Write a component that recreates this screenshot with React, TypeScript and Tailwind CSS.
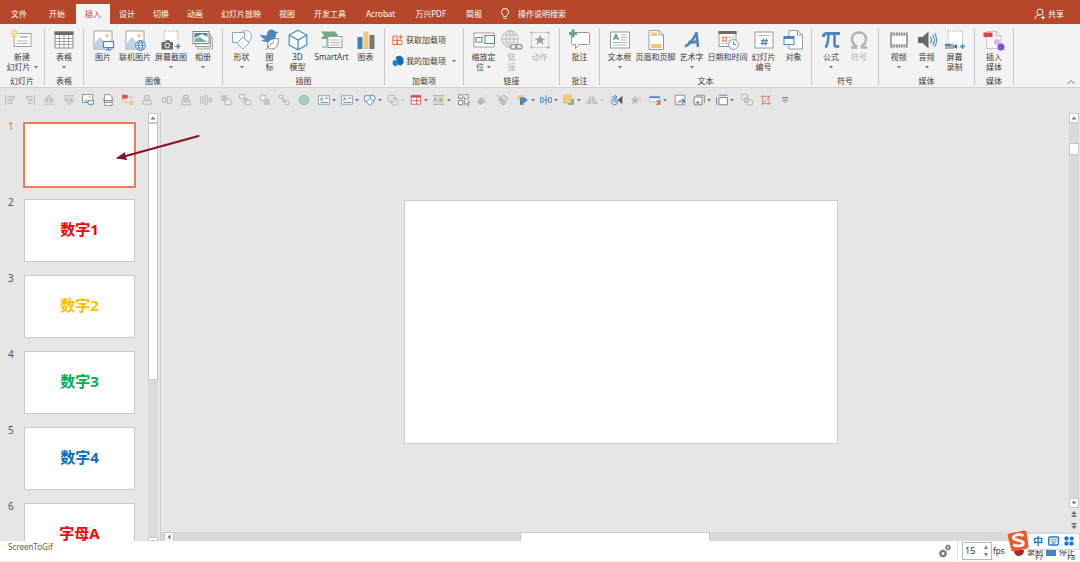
import { useState } from 'react'
import type { ReactNode } from 'react'
import { clsx } from 'clsx'

const GRAY = '#8a8a8a'
const LIGHT = '#b4b4b4'
const BLUE = '#4a86c0'
const GOLD = '#efc878'

function Icon({ children, className }: { children: ReactNode; className?: string }) {
  return (
    <svg
      viewBox="0 0 20 20"
      fill="none"
      className={clsx('shrink-0 overflow-visible', className ?? 'h-5 w-5')}
      aria-hidden="true"
    >
      {children}
    </svg>
  )
}

function Caret({ light }: { light?: boolean }) {
  return (
    <svg viewBox="0 0 4 3" className="h-[3px] w-1 shrink-0" aria-hidden="true">
      <path d="M0 0h4L2 2.6z" fill={light ? '#c4c4c4' : '#7a7a7a'} />
    </svg>
  )
}

const picture = (
  <>
    <rect x="1" y="1" width="18" height="18" fill="#fff" stroke="#a0a0a0" />
    <circle cx="14" cy="5.5" r="1.8" fill={GOLD} />
    <path d="M2 18.5V13l5-6 5 6v5.5z" fill="#bcd2ea" />
  </>
)

const ribbonIcons = {
  newSlide: (
    <Icon>
      <rect x="2" y="3.5" width="17" height="13" fill="#fff" stroke="#a0a0a0" />
      <path d="M8 7h8" stroke="#c4c4c4" strokeWidth="2" />
      <path d="M5 11h11M5 13.5h11" stroke={LIGHT} />
      <path d="M3 -1v9M-1.5 3.500h9M-.2 .3l6.400 6.400M6.200 .3L-.2 6.700" stroke="#f0bd5c" />
      <circle cx="3" cy="3.500" r="1.600" fill="#fff" stroke="#f0bd5c" strokeWidth=".6" />
    </Icon>
  ),
  table: (
    <Icon>
      <rect x="1" y="2" width="18" height="16" fill="#fff" stroke={GRAY} />
      <path d="M.5 1.5h19V5H.5z" fill="#6c6c6c" />
      <path d="M1 8.500h18M1 11.500h18M1 14.500h18M5.5 5v13M10 5v13M14.500 5v13" stroke="#a2a2a2" />
    </Icon>
  ),
  picture: (
    <Icon>
      {picture}
      <rect x="10.5" y="11.5" width="10" height="6" fill="#fff" stroke={BLUE} strokeWidth="1.200" />
      <path d="M15.500 18v2M12.500 20h6" stroke={BLUE} strokeWidth="1.200" />
    </Icon>
  ),
  onlinePicture: (
    <Icon>
      {picture}
      <circle cx="15.5" cy="15.5" r="4.900" fill="#fff" stroke={BLUE} />
      <ellipse cx="15.5" cy="15.5" rx="2" ry="4.900" stroke={BLUE} />
      <path d="M11 15.5h9M12 13h7M12 18h7" stroke={BLUE} strokeWidth=".8" />
    </Icon>
  ),
  screenshot: (
    <Icon>
      <rect x="3" y="1" width="14" height="15" fill="#fff" stroke="#a8a8a8" strokeDasharray="1 1" />
      <path d="M.5 12H4l1-1.700h3.500l1 1.700H12v7.500H.5z" fill="#6a6a6a" />
      <circle cx="6.300" cy="15.500" r="2.300" fill="#6a6a6a" stroke="#fff" />
      <path d="M17 14v5M14.500 16.500h5" stroke={BLUE} strokeWidth="1.400" />
    </Icon>
  ),
  album: (
    <Icon>
      <path d="M4.500 7h15v12h-15z" fill="#ddd" stroke="#b5b5b5" />
      <path d="M2.500 4.500h15v12h-15z" fill="#eee" stroke="#a5a5a5" />
      <rect x="0" y="1.500" width="16" height="12" fill="#fff" stroke="#858585" />
      <path d="M1.500 3h13v4L9 4 1.500 8z" fill={BLUE} />
      <path d="M1.500 9l5-2 8 5h-13z" fill="#7fb29c" />
    </Icon>
  ),
  shapes: (
    <Icon>
      <circle cx="13.5" cy="6.500" r="6" fill="#fff" stroke="#7fa9d6" />
      <path d="M.5 2.500h12v10H.5z" fill="#fff" stroke="#7fa9d6" />
      <path d="M11 7l6 6-6 6-6-6z" fill="#fff" stroke="#7fa9d6" />
    </Icon>
  ),
  icons: (
    <Icon>
      <path d="M0 4c2 1.500 5 2 7 1 0-3 1.500-5.500 4.500-5.500 2 0 3 1 3.500 2L18.500 2l-2.500 2c0 5-3 8-8 8-3 0-5-.6-7-2 2 0 3-.4 4-1-3-.5-4.500-2.500-5-5z" fill={BLUE} />
      <path d="M18.500 8.500c-7 0-11 2-11 6.500 0 3 2 4 4 4 5 0 7-4 7-10.500z" fill="#fff" stroke={GRAY} />
      <path d="M6 20c2-4 5-6 8-8" stroke={GRAY} />
    </Icon>
  ),
  model: (
    <Icon>
      <path d="M10 .3l8.800 4.700v10L10 19.700 1.200 15V5z" fill="#fff" stroke="#3c8ad0" strokeWidth="1.200" />
      <path d="M1.200 5L10 10l8.800-5M10 10v9.700" stroke="#3c8ad0" strokeWidth="1.200" />
    </Icon>
  ),
  smartArt: (
    <Icon>
      <path d="M-1 1.500h14L16 5l-3 4H-1l3-3.700z" fill="#75a78e" />
      <path d="M5 9v8H0" stroke="#75a78e" />
      <rect x="6" y="6.500" width="14" height="11" fill="#fff" stroke="#999" />
      <path d="M8 10h10M8 12.500h10M8 15h10" stroke="#b5b5b5" />
    </Icon>
  ),
  chart: (
    <Icon>
      <path d="M1.500 7h5v12h-5z" fill="#477fb5" />
      <path d="M7.500 1.500h5V19h-5z" fill={GOLD} />
      <path d="M13.500 5h5v14h-5z" fill="#777" />
    </Icon>
  ),
  zoom: (
    <Icon>
      <rect x="0" y="3" width="20" height="14" fill="#fff" stroke="#a0a0a0" />
      <rect x="2" y="7.500" width="6" height="4.500" stroke={BLUE} />
      <rect x="11" y="5.500" width="9.500" height="8" fill="#fff" stroke={BLUE} />
      <path d="M8 7.500l3-2M8 12l3 1.500" stroke="#9dbede" />
    </Icon>
  ),
  link: (
    <Icon>
      <circle cx="8" cy="9" r="8.300" stroke="#b9b9b9" />
      <ellipse cx="8" cy="9" rx="4" ry="8.300" stroke="#b9b9b9" />
      <path d="M0 9h16M1 5h14M1 13h14M8 1v16" stroke="#b9b9b9" />
      <path d="M8 13h14v8H8z" fill="#f3f3f3" />
      <rect x="8.500" y="14.500" width="6.500" height="4.500" rx="2.200" stroke="#9b9b9b" strokeWidth="1.400" />
      <rect x="13.500" y="14.500" width="6.500" height="4.500" rx="2.200" stroke="#9b9b9b" strokeWidth="1.400" />
    </Icon>
  ),
  action: (
    <Icon>
      <rect x="1.500" y="2.500" width="17" height="15" stroke="#b8b8b8" strokeDasharray="1.500 1" />
      <path d="M10 4.500l1.500 4h4l-3.200 2.300 1.300 4L10 12.300l-3.600 2.500 1.300-4L4.500 8.500h4z" fill="#9b9b9b" />
      <path d="M.5 1.500h2v2h-2zM17.500 1.500h2v2h-2zM.5 16.500h2v2h-2zM17.500 16.500h2v2h-2z" fill="#aaa" />
    </Icon>
  ),
  comment: (
    <Icon>
      <path d="M2.500 2.500h16a1 1 0 011 1v10a1 1 0 01-1 1H9l-3.500 4v-4h-3a1 1 0 01-1-1v-10z" fill="#fff" stroke="#999" />
      <path d="M-1 2h2.500V-.5h3V2H7v3H4.500v2.500h-3V5H-1z" fill="#6aa58b" />
    </Icon>
  ),
  textBox: (
    <Icon>
      <rect x=".5" y="2" width="19" height="16" fill="#fff" stroke="#999" />
      <path d="M3.500 10L6 4.500 8.500 10M4.500 8.200h3" stroke={BLUE} strokeWidth="1.300" />
      <path d="M11 5h6M11 7.500h6M11 10h6M3 12.500h14M3 15h14" stroke="#b5b5b5" />
    </Icon>
  ),
  headerFooter: (
    <Icon>
      <path d="M3 .5h10l4.500 4.500v14.500H3z" fill="#fff" stroke="#999" />
      <path d="M13 .5V5h4.500" stroke="#999" />
      <path d="M5 2.500h6v3.500H5zM5 14h10.500v4H5z" fill={GOLD} />
    </Icon>
  ),
  wordArt: (
    <Icon>
      <path d="M3 16.500C9 13.500 12 9 14.500 2.500L16 17M6.500 11.500c3 1.500 6 1 9-.5" stroke={BLUE} strokeWidth="2.600" />
    </Icon>
  ),
  dateTime: (
    <Icon>
      <rect x="1" y="1.500" width="17" height="15" fill="#fff" stroke="#999" />
      <path d="M.5 1h18v3H.5z" fill="#6c6c6c" />
      <path d="M3 7.500h13M3 10.500h13M3 13.500h13M5 5v10M8.500 5v10M12 5v10M15.500 5v10" stroke="#cfcfcf" />
      <rect x="5" y="7.500" width="3.500" height="3.500" stroke="#e88a5a" />
      <circle cx="15.500" cy="14.500" r="4.900" fill="#fff" stroke="#6f9fce" />
      <path d="M15.500 11.500v3h2.500" stroke={BLUE} />
    </Icon>
  ),
  slideNumber: (
    <Icon>
      <rect x="1" y="2" width="18" height="16" fill="#fff" stroke="#999" />
      <path d="M4 5.500h12" stroke="#bbb" />
      <path d="M9.500 8.500l-1 7M12.500 8.500l-1 7M7 10.700h7M6.500 13.300h7" stroke={BLUE} strokeWidth="1.200" />
    </Icon>
  ),
  object: (
    <Icon>
      <path d="M5 .5h8.500L18.500 5v14H5z" fill="#fff" stroke="#999" />
      <path d="M13.500 .5V5h5" stroke="#999" />
      <rect x="0" y="6.500" width="10" height="8" fill="#fff" stroke={BLUE} />
      <path d="M0 6h10v3H0z" fill={BLUE} />
    </Icon>
  ),
  equation: (
    <Icon>
      <path d="M2 7C2.500 4 4 3.500 6 3.500h13" stroke={BLUE} strokeWidth="2.800" />
      <path d="M7.500 4c0 6-.5 10-3 13.500" stroke={BLUE} strokeWidth="2.600" />
      <path d="M13.500 4v10c0 3 2.500 3.500 4.500 1.500" stroke={BLUE} strokeWidth="2.600" />
    </Icon>
  ),
  omega: (
    <Icon>
      <path d="M2 17.500h5v-1.500C4 14 3 12 3 9c0-4 3-6.500 7-6.500S17 5 17 9c0 3-1 5-4 7v1.500h5" stroke="#b2b2b2" strokeWidth="2.500" />
    </Icon>
  ),
  video: (
    <Icon>
      <rect x="2" y="2.500" width="16" height="15" fill="#fff" />
      <path d="M2 3.500h16M2 16.500h16" stroke="#777" strokeWidth="2" strokeDasharray="1.500 1" />
      <path d="M2 5h16v10H2zM2 2v16M18 2v16" stroke="#888" />
    </Icon>
  ),
  audio: (
    <Icon>
      <path d="M1 7h4.500L11.500 1.500v17L5.500 13H1z" fill="#666" />
      <path d="M13.500 7c1.300 2 1.300 4 0 6M15.500 5c2.200 3 2.200 7 0 10M17.500 3c2.800 4 2.800 10 0 14" stroke={BLUE} strokeWidth="1.100" />
    </Icon>
  ),
  recording: (
    <Icon>
      <rect x="3" y="1" width="14.500" height="16" fill="#fff" stroke="#aaa" strokeDasharray="1 1" />
      <path d="M0 13.500h9v5.500H0z" fill="#b0b0b0" />
      <path d="M0 14h6v2H0z" fill={BLUE} />
      <path d="M8 16.500l4-2.500v5z" fill="#666" />
      <path d="M17.500 14v5M15 16.500h5" stroke={BLUE} strokeWidth="1.400" />
    </Icon>
  ),
  insertMedia: (
    <Icon>
      <path d="M2.500 1.500h10l4.500 4.500v12.500H2.500z" fill="#f7f7f7" stroke="#c9c9c9" />
      <path d="M12.500 1.500V6H17" stroke="#b9b9b9" />
      <path d="M-.5 2.500h9V7h-9z" fill="#e2414a" />
      <circle cx="13" cy="12" r="3" fill="#cdbbf0" />
      <circle cx="17" cy="17" r="3.500" fill="#8250d0" />
    </Icon>
  ),
}

type Command = {
  icon: keyof typeof ribbonIcons
  lines: string[]
  width: string
  caret?: 'below' | 'inline'
  disabled?: boolean
}

type Group = { title: string; width: string; commands?: Command[] }

const S = 'w-7'
const M = 'w-8'
const L = 'w-9'
const XL = 'w-10'

const groups: Group[] = [
  { title: '幻灯片', width: 'w-[45px]', commands: [{ icon: 'newSlide', lines: ['新建', '幻灯片'], width: XL, caret: 'inline' }] },
  { title: '表格', width: 'w-[39px]', commands: [{ icon: 'table', lines: ['表格'], width: S, caret: 'below' }] },
  {
    title: '图像',
    width: 'w-[139px]',
    commands: [
      { icon: 'picture', lines: ['图片'], width: S },
      { icon: 'onlinePicture', lines: ['联机图片'], width: L },
      { icon: 'screenshot', lines: ['屏幕截图'], width: L, caret: 'below' },
      { icon: 'album', lines: ['相册'], width: S, caret: 'below' },
    ],
  },
  {
    title: '插图',
    width: 'w-[162px]',
    commands: [
      { icon: 'shapes', lines: ['形状'], width: S, caret: 'below' },
      { icon: 'icons', lines: ['图', '标'], width: S },
      { icon: 'model', lines: ['3D', '模型'], width: S },
      { icon: 'smartArt', lines: ['SmartArt'], width: XL },
      { icon: 'chart', lines: ['图表'], width: S },
    ],
  },
  { title: '加载项', width: 'w-[79px]' },
  {
    title: '链接',
    width: 'w-24',
    commands: [
      { icon: 'zoom', lines: ['缩放定', '位'], width: S, caret: 'inline' },
      { icon: 'link', lines: ['链', '接'], width: S, disabled: true },
      { icon: 'action', lines: ['动作'], width: S, disabled: true },
    ],
  },
  { title: '批注', width: 'w-10', commands: [{ icon: 'comment', lines: ['批注'], width: S }] },
  {
    title: '文本',
    width: 'w-[212px]',
    commands: [
      { icon: 'textBox', lines: ['文本框'], width: M, caret: 'below' },
      { icon: 'headerFooter', lines: ['页眉和页脚'], width: XL },
      { icon: 'wordArt', lines: ['艺术字'], width: M, caret: 'below' },
      { icon: 'dateTime', lines: ['日期和时间'], width: XL },
      { icon: 'slideNumber', lines: ['幻灯片', '编号'], width: M },
      { icon: 'object', lines: ['对象'], width: S },
    ],
  },
  {
    title: '符号',
    width: 'w-[67px]',
    commands: [
      { icon: 'equation', lines: ['公式'], width: S, caret: 'below' },
      { icon: 'omega', lines: ['符号'], width: S, disabled: true },
    ],
  },
  {
    title: '媒体',
    width: 'w-24',
    commands: [
      { icon: 'video', lines: ['视频'], width: S, caret: 'below' },
      { icon: 'audio', lines: ['音频'], width: S, caret: 'below' },
      { icon: 'recording', lines: ['屏幕', '录制'], width: S },
    ],
  },
  { title: '媒体', width: 'w-[39px]', commands: [{ icon: 'insertMedia', lines: ['插入', '媒体'], width: S }] },
]

const tabs = ['文件', '开始', '插入', '设计', '切换', '动画', '幻灯片放映', '视图', '开发工具', 'Acrobat', '万兴PDF', '简报']

function tabPadding(i: number) {
  if (i < 2) return 'px-[11px]'
  return i < 8 ? 'px-[9px]' : 'px-2.5'
}

function TitleBar() {
  const [active, setActive] = useState('插入')

  return (
    <header className="flex h-6 shrink-0 items-end bg-[#b7472a] text-white">
      <nav className="flex shrink-0">
        {tabs.map((tab, i) => (
          <button
            key={tab}
            onClick={() => setActive(tab)}
            className={clsx('h-5 whitespace-nowrap', tabPadding(i), tab === active && 'bg-[#f3f3f3] text-[#b7472a]')}
          >
            {tab}
          </button>
        ))}
      </nav>
      <label className="ml-2 flex h-5 items-center gap-2">
        <svg viewBox="0 0 10 12" fill="none" stroke="#fff" className="h-3 w-2.5" aria-label="搜索">
          <path d="M3.500 8.500C3.500 7 1.500 6 1.500 4a3.500 3.500 0 017 0c0 2-2 3-2 4.500zM3.500 10.500h3" />
        </svg>
        <input placeholder="操作说明搜索" className="w-16 bg-transparent outline-none placeholder:text-white" />
      </label>
      <button className="mr-4 ml-auto flex h-5 items-center gap-0.5">
        <svg viewBox="0 0 12 12" fill="none" stroke="#fff" className="h-3 w-3" aria-hidden="true">
          <circle cx="6" cy="4" r="3" />
          <path d="M1 11c0-2.500 2-4 4.500-4M9 7.500v4M7 9.500h4" />
        </svg>
        共享
      </button>
    </header>
  )
}

function RibbonCommand({ icon, lines, width, caret, disabled }: Command) {
  return (
    <button
      disabled={disabled}
      className={clsx('flex flex-col items-center leading-[10px] whitespace-nowrap', width, disabled && 'text-[#b2b2b2]')}
    >
      <span className="mb-0.5 flex">{ribbonIcons[icon]}</span>
      {lines.map((line, i) => (
        <span key={line} className="flex items-center gap-[3px]">
          {line}
          {caret === 'inline' && i === lines.length - 1 && <Caret />}
        </span>
      ))}
      {caret === 'below' && (
        <span className="flex h-2.5 items-center">
          <Caret />
        </span>
      )}
    </button>
  )
}

function AddIns() {
  return (
    <div className="flex w-full flex-col gap-[9px] pt-1 pl-[7px] whitespace-nowrap">
      <button className="flex h-3 items-center gap-0.5">
        <Icon className="h-3 w-3">
          <path d="M1.500 3.500h7v14h-7zM1.500 10.500h15v7h-15M9 10.500v7" stroke="#e06a3e" strokeWidth="1.600" />
          <path d="M14.500 1v8M10.500 5h8" stroke="#e06a3e" strokeWidth="1.600" />
        </Icon>
        获取加载项
      </button>
      <button className="flex h-3 items-center gap-0.5">
        <Icon className="h-3 w-3">
          <path d="M6 3l8-2 5 5v8l-5 4-5-3-1-6z" fill="#0f6cbd" />
          <path d="M5 8l5 2 1 5-5 4-5-3 0-5z" fill="#1a80d4" />
        </Icon>
        我的加载项
        <span className="ml-1">
          <Caret />
        </span>
      </button>
    </div>
  )
}

function Ribbon() {
  return (
    <div className="flex h-16 shrink-0 border-b border-[#d0d0d0] bg-[#f3f3f3] pt-1 pb-0.5 text-[#3c3c3c]">
      {groups.map((group, i) => (
        <section key={i} className={clsx('flex shrink-0 flex-col border-r border-[#c8c8c8]', group.width)}>
          <div className="flex flex-1 justify-center pt-0.5">
            {group.commands ? group.commands.map((c) => <RibbonCommand key={c.icon} {...c} />) : <AddIns />}
          </div>
          <h2 className="text-center leading-2">{group.title}</h2>
        </section>
      ))}
      <button className="mr-1 ml-auto self-end" aria-label="折叠功能区">
        <svg viewBox="0 0 10 6" fill="none" stroke="#777" className="h-1.5 w-2.5">
          <path d="M1.500 5L5 1.500 8.500 5" />
        </svg>
      </button>
    </div>
  )
}

const G = '#b4b2b4'

const alignTools: ReactNode[] = [
  <path d="M3 1v18M6 4h11v4H6M6 11h7v5H6" stroke={G} strokeWidth="1.500" />,
  <path d="M17 1v18M14 4H4v4h10M14 11H8v5h6" stroke={G} strokeWidth="1.500" />,
  <path d="M1 17h18M3 14V8h3v6M8 14V3h4v11M14 14V8h3v6" stroke={G} strokeWidth="1.500" />,
  <path d="M1 3h18M3 6v5h3V6M8 6v11h4V6M14 6v7h3V6" stroke={G} strokeWidth="1.500" />,
  <>
    <rect x="1" y="1" width="17" height="13" fill="#fff" stroke="#8a8a8a" strokeWidth="1.500" />
    <path d="M3 13l4-5 4 5z" fill="#9fc0e2" />
    <circle cx="13" cy="5" r="2" fill={GOLD} />
    <path d="M10 11h9v6h-9zM15 17v2" fill="#fff" stroke={BLUE} strokeWidth="1.500" />
  </>,
  <>
    <path d="M4 10V1h9l4 4v5M4 14v5h13v-5" fill="#fff" stroke="#888" strokeWidth="1.500" />
    <path d="M1 9.500h3M16 9.500h3" stroke="#888" strokeWidth="1.500" />
    <path d="M4 11h13v3H4z" fill="#fff" stroke="#777" strokeWidth="1.500" />
  </>,
  <>
    <path d="M1 1v10M1 2h8v5H1z" fill="#e24a4a" stroke="#e24a4a" />
    <path d="M10 5h8v5M5 10v4h5" stroke={G} />
    <circle cx="15" cy="15" r="4" fill={GOLD} />
  </>,
  <path d="M10 1v2M6 3h8v5H6zM10 8v3M3 11h14v6H3zM10 17v2" stroke={G} strokeWidth="1.500" />,
  <path d="M1 10h2M3 6h5v8H3zM8 10h3M11 4h6v12h-6zM17 10h2" stroke={G} strokeWidth="1.500" />,
  <path d="M2 10h16M6 3h8v4H6zM3 13h14v5H3zM10 0v3M10 7v6" stroke={G} strokeWidth="1.500" />,
  <path d="M1 5v10h4V5zM8 3v14h4V3zM15 7h4v6h-4z" stroke={G} strokeWidth="1.500" />,
  <>
    <path d="M8 8h10v10H8z" fill="#eee" stroke={G} strokeWidth="1.500" />
    <path d="M2 2h10v10H2z" fill="#c6c2c6" />
  </>,
  <>
    <path d="M6 6h9v9H6z" fill="#cbc7cb" />
    <path d="M1 1h8v7H1zM11 11h8v7h-8z" fill="#eee" stroke={G} strokeWidth="1.500" />
  </>,
  <>
    <path d="M2 2h9v9H2z" fill="#eee" stroke={G} strokeWidth="1.500" />
    <path d="M8 8h10v10H8z" fill="#c6c2c6" />
  </>,
  <>
    <path d="M2 2h6v5H2zM12 12h6v6h-6z" fill="#eee" stroke={G} strokeWidth="1.500" />
    <path d="M7 8h5v5H7z" fill="#c6c2c6" />
  </>,
  <circle cx="10" cy="10" r="8" fill="#a5cfbb" stroke="#86b7a0" strokeWidth="1.500" />,
]

const textShape = (
  <>
    <rect x="1" y="3" width="18" height="14" fill="#fff" stroke="#999" strokeWidth="1.500" />
    <path d="M4 11l2-5 2 5M11 7h6M4 14h13" stroke={BLUE} strokeWidth="1.500" />
  </>
)

type Tool = { drawing: ReactNode; menu?: boolean; light?: boolean }

const toolGroups: Tool[][] = [
  [
    { menu: true, drawing: textShape },
    { menu: true, drawing: textShape },
    {
      menu: true,
      drawing: (
        <>
          <circle cx="13" cy="7" r="5.500" fill="#fff" stroke={BLUE} strokeWidth="1.500" />
          <path d="M1 3h10v9H1z" fill="#fff" stroke={BLUE} strokeWidth="1.500" />
          <path d="M10 7l6 6-6 6-6-6z" fill="#fff" stroke={BLUE} strokeWidth="1.500" />
        </>
      ),
    },
    {
      menu: true,
      light: true,
      drawing: (
        <>
          <circle cx="8" cy="8" r="6.500" stroke={G} strokeWidth="1.500" />
          <circle cx="13" cy="13" r="6" stroke={G} strokeWidth="1.500" />
        </>
      ),
    },
    {
      menu: true,
      drawing: (
        <>
          <path d="M2 3h16v14H2zM2 11h16M11 6v11" fill="#fff" stroke="#d9595c" strokeWidth="1.500" />
          <path d="M2 2h16v4H2z" fill="#d9494c" />
        </>
      ),
    },
    {
      menu: true,
      drawing: (
        <>
          <path d="M0 3h19M0 17h19" stroke="#999" strokeWidth="1.500" />
          <path d="M11 6h7v8h-7z" fill={GOLD} />
          <path d="M1 13l3-7 3 7M9 7l6 6M15 7l-6 6" stroke="#6a9d80" strokeWidth="1.500" />
        </>
      ),
    },
  ],
  [
    {
      drawing: (
        <>
          <path d="M1 1h7v6H1zM1 11h7v7H1zM11 1h6v7" fill="#fff" stroke="#777" strokeWidth="1.500" />
          <path d="M1 1h7v2H1z" fill={GOLD} />
          <path d="M11 6v12l3-3 2 5 2-1-2-5h4z" fill="#fff" stroke="#555" />
        </>
      ),
    },
    { drawing: <path d="M18 1l-7 8M7 6l7 7-3 2-7-7zM4 9l6 6-5 3-4-4z" fill="#b4b4b4" stroke="#b4b4b4" /> },
    {
      drawing: (
        <>
          <path d="M1 2l6 4M8 6l7 7 4-7-6-4z" fill="#ddd" stroke="#a5a5a5" strokeWidth="1.500" />
          <path d="M4 9l6 8c3 3 6 0 5-4L8 6z" fill="#c4c4c4" stroke="#a5a5a5" strokeWidth="1.500" />
        </>
      ),
    },
  ],
  [
    {
      menu: true,
      drawing: (
        <>
          <path d="M1 2h11v9H1z" fill={GOLD} />
          <path d="M5 6h8l5 4-5 4H5z" fill={BLUE} />
          <path d="M5 13h6v5H5z" fill="#777" />
        </>
      ),
    },
    { menu: true, drawing: <path d="M1 6h4v8H1zM10 2v16M14 6h5v8h-5zM5 10h9" stroke={BLUE} strokeWidth="1.500" /> },
    {
      menu: true,
      drawing: (
        <>
          <path d="M8 8h10v10H8z" fill="#70a68a" />
          <path d="M1 2h13v13H1z" fill={GOLD} stroke="#e2b55c" />
        </>
      ),
    },
    { menu: true, light: true, drawing: <path d="M1 16L8 4v12zM11 4l8 12h-8z" fill="#c8c8c8" stroke={G} /> },
  ],
  [
    {
      drawing: (
        <>
          <circle cx="6" cy="13" r="5" stroke={BLUE} strokeWidth="1.600" />
          <path d="M6 10v3h3M1 5h9M6 1l4 4-4 3" stroke={BLUE} strokeWidth="1.600" />
          <path d="M11 10l8-7v14z" fill="#555" />
        </>
      ),
    },
    {
      drawing: (
        <>
          <path d="M8 2l2 6h6l-5 3 2 6-5-3-5 3 2-6-4-3h5z" fill="#b4b4b4" />
          <path d="M11 6h8M13 10h6" stroke={G} />
        </>
      ),
    },
    {
      menu: true,
      drawing: (
        <>
          <path d="M1 4h17v9H1z" fill="#fff" stroke="#999" />
          <path d="M1 4h17v3H1z" fill={BLUE} />
          <path d="M13 10l5 6M18 10v7h-6" stroke="#d95a3e" strokeWidth="2" />
        </>
      ),
    },
  ],
  [
    {
      drawing: (
        <>
          <path d="M2 2h16v16H2z" fill="#fff" stroke="#888" strokeWidth="1.500" />
          <path d="M3 16l4-5 4 5z" fill={GOLD} />
          <path d="M8 12h8M13 8l5 4-5 4" stroke={BLUE} strokeWidth="2" />
        </>
      ),
    },
    {
      menu: true,
      drawing: (
        <>
          <path d="M5 2h14v13" stroke="#888" strokeWidth="1.500" />
          <path d="M2 5h13v13H2z" fill="#fff" stroke="#777" strokeWidth="1.500" />
          <path d="M4 16l4-5 4 5z" fill={BLUE} />
        </>
      ),
    },
    {
      menu: true,
      drawing: (
        <>
          <path d="M5 6h14v12H5z" fill="#fff" stroke="#777" strokeWidth="1.500" />
          <path d="M5 2h14M1 6v12" stroke={BLUE} strokeWidth="1.500" />
        </>
      ),
    },
  ],
  [
    { drawing: <path d="M1 1h10v8H1zM6 6h6v8H6zM10 10h9v8h-9z" fill="#eee" stroke={G} strokeWidth="1.500" /> },
    { drawing: <path d="M4 2v14h15M1 4h14v14M2 19L18 2" stroke="#e07a78" strokeWidth="1.500" /> },
    {
      drawing: (
        <>
          <path d="M5 6h10" stroke="#666" strokeWidth="1.500" />
          <path d="M6 10h8l-4 4z" fill="#fff" stroke="#666" strokeWidth="1.300" />
        </>
      ),
    },
  ],
]

function QuickAccess() {
  return (
    <div className="flex h-6 shrink-0 items-center pl-1">
      <div className="flex w-[306px] shrink-0 justify-between">
        {alignTools.map((drawing, i) => (
          <button key={i} className="flex">
            <Icon className="h-3 w-3">{drawing}</Icon>
          </button>
        ))}
      </div>
      <div className="ml-2 flex shrink-0 gap-0.5">
        {toolGroups.map((tools, i) => (
          <div key={i} className="flex">
            {tools.map(({ drawing, menu, light }, j) => (
              <button key={j} className={clsx('flex items-center gap-0.5', menu ? 'w-[23px]' : 'w-[19px]')}>
                <Icon className="h-3 w-3">{drawing}</Icon>
                {menu && <Caret light={light} />}
              </button>
            ))}
          </div>
        ))}
      </div>
    </div>
  )
}

const slides = [
  { text: '', color: '' },
  { text: '数字1', color: 'text-[#ff0000]' },
  { text: '数字2', color: 'text-[#ffc000]' },
  { text: '数字3', color: 'text-[#00b050]' },
  { text: '数字4', color: 'text-[#0070c0]' },
  { text: '字母A', color: 'text-[#ff0000]' },
]

function ScrollButton({ d, label }: { d: string; label: string }) {
  return (
    <button aria-label={label} className="flex h-2.5 w-2.5 shrink-0 items-center justify-center border border-[#c6c6c6] bg-white">
      <svg viewBox="0 0 6 6" className="h-1.5 w-1.5">
        <path d={d} fill="#777" />
      </svg>
    </button>
  )
}

const UP = 'M.5 4.500h5L3 1.500z'
const DOWN = 'M.5 1.500h5L3 4.500z'
const LEFT = 'M4.500 .5v5L1.500 3z'

function SlidePanel() {
  const [selected, setSelected] = useState(0)

  return (
    <aside className="flex w-[161px] shrink-0 border-r border-[#cdcdcd]">
      <ol className="flex h-full flex-1 flex-col gap-3 overflow-hidden pt-[11px] pl-2">
        {slides.map((slide, i) => (
          <li key={i} className="flex h-16 shrink-0 items-start">
            <span className={clsx('w-4 text-[10px] leading-1.5', i === selected ? 'text-[#e2694a]' : 'text-[#555]')}>
              {i + 1}
            </span>
            <button
              onClick={() => setSelected(i)}
              aria-label={`幻灯片 ${i + 1}`}
              className={clsx(
                'w-[111px] border bg-white pb-0.5 text-[15px] font-bold',
                slide.color,
                i === selected ? 'h-16 border-[#ef7a58] ring-1 ring-[#ef7a58]' : 'h-[63px] border-[#cacaca]'
              )}
            >
              {slide.text}
            </button>
          </li>
        ))}
      </ol>
      <div className="mt-px mr-0.5 flex w-2.5 flex-col bg-[#dadada]">
        <ScrollButton d={UP} label="向上滚动" />
        <div className="h-[60%] border border-[#c6c6c6] bg-white" />
        <div className="flex-1" />
        <div className="h-1 shrink-0 overflow-hidden">
          <ScrollButton d={DOWN} label="向下滚动" />
        </div>
      </div>
    </aside>
  )
}

function SlideEditor() {
  return (
    <>
      <main className="flex min-w-0 flex-1 flex-col">
        <div className="flex flex-1 items-center justify-center pl-3">
          <div className="aspect-video w-full max-w-[434px] border border-[#cacaca] bg-white" />
        </div>
        <div className="flex h-[9px] shrink-0 overflow-hidden bg-[#dadada] pl-[3px]">
          <ScrollButton d={LEFT} label="向左滚动" />
          <div className="flex flex-1 justify-center pr-3">
            <div className="h-2.5 w-[190px] border border-[#c6c6c6] bg-white" />
          </div>
        </div>
      </main>
      <div className="mt-px flex w-3 shrink-0 flex-col items-center">
        <div className="flex flex-1 flex-col bg-[#dadada]">
          <ScrollButton d={UP} label="上一页" />
          <div className="mt-5 h-3 border border-[#c6c6c6] bg-white" />
          <div className="flex-1" />
          <ScrollButton d={DOWN} label="下一页" />
        </div>
        <div className="flex h-[33px] flex-col items-center gap-1.5 pt-[3px]">
          <button aria-label="上一张幻灯片">
            <svg viewBox="0 0 6 6" className="h-1.5 w-1.5">
              <path d="M0 3h6L3 0zM0 6h6L3 3z" fill="#777" />
            </svg>
          </button>
          <button aria-label="下一张幻灯片">
            <svg viewBox="0 0 6 6" className="h-1.5 w-1.5">
              <path d="M0 0h6L3 3zM0 3h6L3 6z" fill="#777" />
            </svg>
          </button>
        </div>
      </div>
    </>
  )
}

function RecorderBar() {
  const [fps, setFps] = useState(15)

  return (
    <footer className="flex h-[21px] shrink-0 border-b border-[#f4f4f4] bg-white text-[#333]">
      <span className="pt-px pl-2 leading-[10px] text-[#6a5a5a]">ScreenToGif</span>
      <button className="mr-[6px] ml-auto self-center" aria-label="选项">
        <svg viewBox="0 0 12 14" fill="none" stroke="#777" className="h-3.5 w-3">
          <circle cx="4" cy="9.500" r="2.500" strokeWidth="2" />
          <circle cx="4" cy="9.500" r="3.500" strokeWidth="1" strokeDasharray="1.300 1" />
          <circle cx="9" cy="3.500" r="1.700" strokeWidth="1.500" />
          <circle cx="9" cy="3.500" r="2.500" strokeWidth="1" strokeDasharray="1 .8" />
        </svg>
      </button>
      <label className="flex items-center border-l border-[#e2e2e2] pl-1">
        <span className="flex h-[18px] w-[30px] items-center border border-[#b8b8b8] pl-0.5">
          <input value={fps} onChange={(e) => setFps(Number(e.target.value) || 0)} className="w-4 text-[9px] outline-none" />
          <span className="ml-auto flex flex-col gap-1 pr-0.5">
            <button aria-label="增加" onClick={() => setFps(fps + 1)}>
              <svg viewBox="0 0 6 5" className="h-1 w-1.5">
                <path d="M.5 5h5L3 0z" fill="#888" />
              </svg>
            </button>
            <button aria-label="减少" onClick={() => setFps(fps - 1)}>
              <svg viewBox="0 0 6 5" className="h-1 w-1.5">
                <path d="M.5 0h5L3 5z" fill="#888" />
              </svg>
            </button>
          </span>
        </span>
        <span className="w-[22px] pl-px">fps</span>
      </label>
      <button className="flex w-8 items-center gap-[3px]">
        <span className="h-2.5 w-2.5 shrink-0 rounded-full bg-[#a12a26]" />
        <span className="flex flex-col items-end pt-2 leading-1.5 whitespace-nowrap">
          录制<span className="text-[7px]">F7</span>
        </span>
      </button>
      <button className="mr-0.5 flex w-8 items-center gap-[3px]">
        <span className="h-2.5 w-2.5 shrink-0 bg-[#4583bd]" />
        <span className="flex flex-col items-end pt-2 leading-1.5 whitespace-nowrap">
          停止<span className="text-[7px]">F8</span>
        </span>
      </button>
    </footer>
  )
}

// Input method bar floating over the bottom right corner
function ImeBar() {
  return (
    <div className="absolute right-0 bottom-2.5 flex items-center">
      <svg viewBox="0 0 22 22" className="z-10 -mr-2 h-[22px] w-[22px]" aria-label="搜狗输入法">
        <path d="M2.500 3.500L17 .5c1.500-.3 2.300.5 2.500 1.500l2 14c.2 1.500-.5 2.300-1.500 2.600L7 21.500c-1.500.3-2.500-.3-2.800-1.700L.8 6C.5 4.500 1.200 3.800 2.500 3.500z" fill="#f0582a" />
        <path d="M16.500 5.500C12 3.500 6 5 6.500 8c.4 3 9.500 1.500 9.800 4.800.3 3.200-6 4.200-10.300 1.700" fill="none" stroke="#fff" strokeWidth="2.800" />
      </svg>
      <div className="flex h-[17px] w-[59px] items-center gap-[5px] border border-[#c3d9ef] bg-white pl-[11px] text-[10px] font-bold text-[#1a73d9]">
        <button className="leading-3">中</button>
        <button aria-label="软键盘">
          <svg viewBox="0 0 11 10" className="h-2.5 w-[11px]" fill="none" stroke="#1a73d9">
            <rect x=".7" y="1" width="9.600" height="8" rx="1" strokeWidth="1.300" />
            <path d="M2.500 3.500h6M2.500 5.200h6" strokeDasharray="1 .6" />
            <path d="M3.500 7h4" />
          </svg>
        </button>
        <button aria-label="工具箱">
          <svg viewBox="0 0 10 10" className="h-2.5 w-2.5" fill="#1a73d9">
            <rect x=".5" y=".5" width="4" height="4" rx="1" />
            <circle cx="7.700" cy="2.500" r="2.100" />
            <rect x=".5" y="5.500" width="4" height="4" rx="1" />
            <rect x="5.500" y="5.500" width="4" height="4" rx="1" />
          </svg>
        </button>
      </div>
    </div>
  )
}

export default function App() {
  return (
    <div className="relative flex h-screen flex-col overflow-hidden bg-[#e6e6e6] font-['Noto_Sans','Noto_Sans_CJK_SC',sans-serif] text-[8px]">
      <TitleBar />
      <Ribbon />
      <QuickAccess />
      <div className="flex min-h-0 flex-1">
        <SlidePanel />
        <SlideEditor />
      </div>
      <RecorderBar />
      <ImeBar />
      <svg viewBox="0 0 86 28" className="pointer-events-none absolute top-[133px] left-[115px] h-7 w-[86px]" aria-hidden="true">
        <path d="M83.500 3L9 23.500" stroke="#8b1028" strokeWidth="2.100" strokeLinecap="round" />
        <path d="M.5 25.500l9.500-6.500.3 3.500 2 4.500z" fill="#8b1028" />
      </svg>
    </div>
  )
}
